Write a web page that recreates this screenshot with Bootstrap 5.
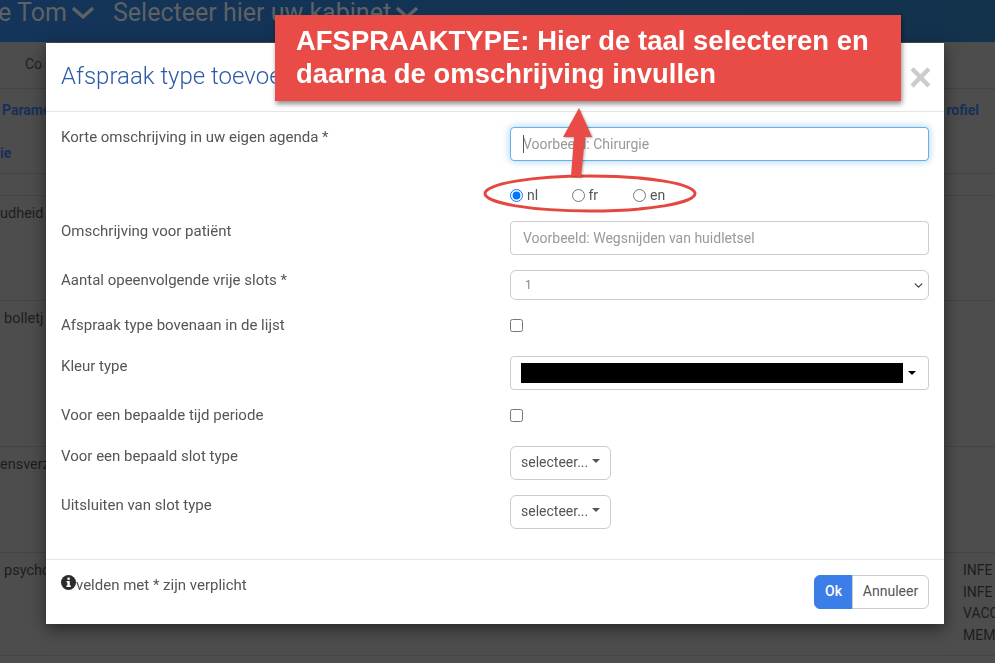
<!DOCTYPE html>
<html lang="nl">
<head>
    <meta charset="UTF-8">
    <meta name="viewport" content="width=device-width, initial-scale=1.0">
    <title>Afspraak type toevoegen</title>
    <link href="https://cdn.jsdelivr.net/npm/bootstrap@5.3.0/dist/css/bootstrap.min.css" rel="stylesheet">
    <style>
        html, body { height: 100%; overflow: hidden; }
        body { background: #4d4d4d; font-family: Roboto, "Liberation Sans", sans-serif; font-size: 14px; color: #555; }

        /* pagina achter de modal */
        .topbalk { height: 42px; padding-top: 0; background: linear-gradient(90deg, #14345a, #13324c); color: #5e6264; font-size: 25px; line-height: 26px; white-space: nowrap; overflow: hidden; }
        .topbalk svg { flex: none; }
        .topnaam { margin-left: -2px; width: 115px; }
        .subbalk { height: 47px; padding: 12px 0 0 25px; color: #222; border-bottom: 1px solid #444; }
        .kopregel { height: 85px; border-bottom: 1px solid #444; color: #17305a; font-weight: 700; line-height: 20px; }
        .kopregel .param { padding: 11px 0 0 2px; }
        .kopregel .tweede { padding-top: 23px; }
        .tussen { height: 22px; border-bottom: 1px solid #444; }
        .rij-bg { border-bottom: 1px solid #444; color: #1d1d1d; white-space: nowrap; line-height: 21.5px; overflow: hidden; font-size: 14.5px; padding-top: 7px; }
        .rechts-bg { width: 32px; overflow: hidden; font-size: 14px; }

        /* modal */
        .modal-dialog.afspraak { max-width: 898px; width: 898px; margin: 43px 0 0 46px; }
        .afspraak .modal-content { border: 0; border-radius: 0; box-shadow: 0 5px 15px rgba(0,0,0,.5); color: #555; }
        .afspraak .modal-header { height: 69px; padding: 14px 15px 16px; border-bottom: 1px solid #e5e5e5; }
        .afspraak .modal-title { font-size: 24px; font-weight: 300; color: #2a5aa8; line-height: 26px; }
        .sluit-x { font-family: "Liberation Sans", Arial, sans-serif; font-size: 40px; font-weight: 700; line-height: 1; color: #ccc; margin-top: 1px; margin-right: -3px; }
        .afspraak .modal-body { padding: 15px 15px 0; height: 447px; }
        .veld { margin-bottom: 15px; --bs-gutter-x: 30px; }
        .veld label.kop { line-height: 20px; display: block; font-size: 15px; }
        .regel-26 { height: 26px; }
        .invoer { height: 34px; border-color: #ccc; border-radius: 4px; padding: 6px 12px; font-size: 14px; color: #555; }
        .invoer::placeholder { color: #999; }
        .invoer.actief { border-color: #66afe9; box-shadow: 0 0 8px rgba(102,175,233,.6); }
        .cursor-streep { position: absolute; left: 13px; top: 8px; width: 1px; height: 18px; background: #555; }
        .keuze-klein { height: 30px; padding: 4px 12px 4px 14px; font-size: 12px; color: #888; border-color: #ccc; background-position: right 4px center; background-size: 11px 9px; }
        .talen { height: 30px; padding-top: 8px; line-height: 20px; }
        .talen label { width: 61.5px; display: flex; align-items: center; gap: 4px; }
        .talen input { margin: 0; width: 13px; height: 13px; }
        .vinkje { width: 13px; height: 13px; margin: 4px 0 0; display: block; }
        .kleur-knop { width: 100%; height: 34px; font-size: 14px; background: #fff; border: 1px solid #ccc; padding: 6px 12px 6px 10px; display: flex; align-items: center; justify-content: space-between; border-radius: 4px; }
        .kleur-balk { width: 382px; height: 20px; background: #000; }
        .knop-wit { height: 34px; font-size: 14px; color: #555; background: #fff; border-color: #ccc; padding: 5px 10px 7px; }
        .afspraak .modal-footer { height: 65px; padding: 15px; border-top: 1px solid #e5e5e5; flex-wrap: nowrap; align-items: flex-start; justify-content: space-between; }
        .afspraak .modal-footer > * { margin: 0; }
        .voet-tekst { line-height: 20px; font-size: 15px; }
        .knop-ok { background: #3b7ee8; border-color: #3b7ee8; color: #fff; font-size: 14px; height: 34px; width: 39px; padding: 5px 0 7px; font-weight: 500; }
        .knop-annuleer { background: #fff; border-color: #ccc; color: #555; font-size: 14px; height: 34px; width: 77px; padding: 5px 0 7px; }

        /* instructie er bovenop */
        .uitleg { position: fixed; left: 275px; top: 15px; width: 626px; height: 86px; padding: 9px 21px; background: #e94c46; color: #fff; font-family: "Liberation Sans", Arial, sans-serif; font-weight: 700; font-size: 27.4px; line-height: 33px; letter-spacing: .05px; box-shadow: 1px 3px 5px rgba(0,0,0,.45); z-index: 1060; }
        .markering { position: fixed; left: 0; top: 0; z-index: 1061; pointer-events: none; }
        .markering path { filter: drop-shadow(1px 1px 1px rgba(0,0,0,.3)); }
    </style>
</head>
<body>
    <div class="topbalk d-flex align-items-start">
        <span class="topnaam d-flex align-items-center">e Tom
            <svg class="ms-1" width="24" height="14" viewBox="0 0 24 14"><path d="M2 2l10 9 10-9" fill="none" stroke="#5e6264" stroke-width="3.5"/></svg>
        </span>
        <span class="d-flex align-items-center">Selecteer hier uw kabinet
            <svg class="ms-1" width="24" height="14" viewBox="0 0 24 14"><path d="M2 2l10 9 10-9" fill="none" stroke="#5e6264" stroke-width="3.5"/></svg>
        </span>
    </div>
    <div class="subbalk">Co</div>
    <div class="kopregel d-flex justify-content-between">
        <div>
            <div class="param">Parameters</div>
            <div class="tweede">ie</div>
        </div>
        <div class="param pe-3">rofiel</div>
    </div>
    <div class="tussen"></div>
    <div class="rij-bg" style="height:105px">udheid</div>
    <div class="rij-bg ps-1" style="height:146px">bolletj</div>
    <div class="rij-bg" style="height:106px">ensverz</div>
    <div class="rij-bg d-flex justify-content-between" style="height:103px">
        <span class="ps-1">psycho</span>
        <div class="rechts-bg"><div>INFE</div><div>INFE</div><div>VACC</div><div>MEM</div></div>
    </div>

    <div class="modal d-block" tabindex="-1">
        <div class="modal-dialog afspraak">
            <div class="modal-content">
                <div class="modal-header">
                    <h4 class="modal-title mb-0">Afspraak type toevoegen</h4>
                    <span class="sluit-x ms-auto">&times;</span>
                </div>
                <div class="modal-body">
                    <div class="row veld">
                        <div class="col-6"><label class="kop">Korte omschrijving in uw eigen agenda *</label></div>
                        <div class="col-6">
                            <div class="position-relative">
                                <input type="text" class="form-control invoer actief" placeholder="Voorbeeld: Chirurgie">
                                <span class="cursor-streep"></span>
                            </div>
                        </div>
                    </div>
                    <div class="row veld">
                        <div class="col-6"></div>
                        <div class="col-6 d-flex talen">
                            <label><input type="radio" name="taal" checked> nl</label>
                            <label><input type="radio" name="taal"> fr</label>
                            <label><input type="radio" name="taal"> en</label>
                        </div>
                    </div>
                    <div class="row veld">
                        <div class="col-6"><label class="kop">Omschrijving voor patiënt</label></div>
                        <div class="col-6"><input type="text" class="form-control invoer" placeholder="Voorbeeld: Wegsnijden van huidletsel"></div>
                    </div>
                    <div class="row veld">
                        <div class="col-6"><label class="kop">Aantal opeenvolgende vrije slots *</label></div>
                        <div class="col-6">
                            <select class="form-select keuze-klein"><option>1</option><option>2</option><option>3</option></select>
                        </div>
                    </div>
                    <div class="row veld regel-26">
                        <div class="col-6"><label class="kop">Afspraak type bovenaan in de lijst</label></div>
                        <div class="col-6"><input type="checkbox" class="vinkje"></div>
                    </div>
                    <div class="row veld">
                        <div class="col-6"><label class="kop">Kleur type</label></div>
                        <div class="col-6">
                            <button type="button" class="kleur-knop dropdown-toggle"><span class="kleur-balk"></span></button>
                        </div>
                    </div>
                    <div class="row veld regel-26">
                        <div class="col-6"><label class="kop">Voor een bepaalde tijd periode</label></div>
                        <div class="col-6"><input type="checkbox" class="vinkje"></div>
                    </div>
                    <div class="row veld">
                        <div class="col-6"><label class="kop">Voor een bepaald slot type</label></div>
                        <div class="col-6"><button type="button" class="btn knop-wit dropdown-toggle">selecteer...</button></div>
                    </div>
                    <div class="row veld">
                        <div class="col-6"><label class="kop">Uitsluiten van slot type</label></div>
                        <div class="col-6"><button type="button" class="btn knop-wit dropdown-toggle">selecteer...</button></div>
                    </div>
                </div>
                <div class="modal-footer">
                    <div class="voet-tekst d-flex">
                        <svg width="15" height="15" viewBox="0 0 15 15"><circle cx="7.5" cy="7.5" r="7.5" fill="#2b2b2b"/><rect x="6.4" y="2.6" width="2.4" height="2.2" fill="#fff"/><path d="M5.6 6h3.2v4.6h1v1.5H5.4v-1.5h1V7.5h-.8z" fill="#fff"/></svg>
                        <span>velden met * zijn verplicht</span>
                    </div>
                    <div class="btn-group">
                        <button type="button" class="btn knop-ok">Ok</button>
                        <button type="button" class="btn knop-annuleer">Annuleer</button>
                    </div>
                </div>
            </div>
        </div>
    </div>

    <div class="uitleg">AFSPRAAKTYPE: Hier de taal selecteren en daarna de omschrijving invullen</div>
    <svg class="markering" width="995" height="663" viewBox="0 0 995 663">
        <ellipse cx="590" cy="193.5" rx="105" ry="17.5" fill="none" stroke="#e5473f" stroke-width="3"/>
        <path d="M571 176l3-39h-11l16-29 13 29h-7l-4 40z" fill="#e94c46"/>
    </svg>
</body>
</html>
